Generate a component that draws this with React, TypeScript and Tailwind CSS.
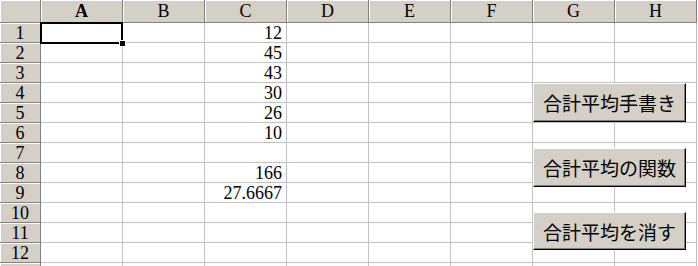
import React from 'react';

const cols = ['A', 'B', 'C', 'D', 'E', 'F', 'G', 'H'];

const values: Record<number, string> = {
    1: '12',
    2: '45',
    3: '43',
    4: '30',
    5: '26',
    6: '10',
    8: '166',
    9: '27.6667',
};

const rows = Array.from({ length: 13 }, (_, i) => i + 1);

const SheetButton: React.FC<{ label: string; top: string }> = ({ label, top }) => (
    <div
        className={`absolute left-[533px] ${top} w-[153px] flex items-center justify-center bg-[#d4d0c8] border-t border-l border-t-white border-l-white border-b border-r border-b-black border-r-black shadow-[inset_-1px_-1px_0_#808080] text-[19px] text-black leading-none`}
        style={{ fontFamily: '"Noto Sans CJK JP", sans-serif' }}
    >
        {label}
    </div>
);

const App: React.FC = () => {
    return (
        <div
            className="relative w-[698px] h-[266px] overflow-hidden bg-white"
            style={{ fontFamily: '"Liberation Serif", serif' }}
        >
            <div className="flex h-[23px]">
                <div className="w-[41px] shrink-0 bg-[#d4d0c8] border-r border-b border-[#808080] shadow-[inset_1px_1px_0_#fff]"></div>
                {cols.map((c) => (
                    <div
                        key={c}
                        className={`w-[82px] shrink-0 bg-[#d4d0c8] border-r border-b border-[#808080] shadow-[inset_1px_1px_0_#fff] flex items-center justify-center text-[18px] text-black leading-none ${c === 'A' ? 'font-bold' : ''}`}
                    >
                        {c}
                    </div>
                ))}
            </div>

            {rows.map((r) => (
                <div key={r} className="flex h-[20px]">
                    <div className="w-[41px] shrink-0 bg-[#d4d0c8] border-r border-b border-[#808080] shadow-[inset_1px_1px_0_#fff] flex items-center justify-center text-[18px] text-black leading-none">
                        {r < 13 ? r : ''}
                    </div>
                    {cols.map((c) => (
                        <div
                            key={c}
                            className="w-[82px] shrink-0 border-r border-b border-[#c0c0c0] flex items-center justify-end pr-[4px] text-[18px] text-black leading-none"
                        >
                            {c === 'C' ? values[r] ?? '' : ''}
                        </div>
                    ))}
                </div>
            ))}

            {/* active cell A1 */}
            <div className="absolute left-[40px] top-[22px] w-[83px] h-[22px] border-2 border-black"></div>
            <div className="absolute left-[119px] top-[40px] w-[7px] h-[7px] bg-black border border-white"></div>

            <SheetButton label="合計平均手書き" top="top-[83px] h-[39px]" />
            <SheetButton label="合計平均の関数" top="top-[148px] h-[39px]" />
            <SheetButton label="合計平均を消す" top="top-[212px] h-[38px]" />
        </div>
    );
};

export default App;
